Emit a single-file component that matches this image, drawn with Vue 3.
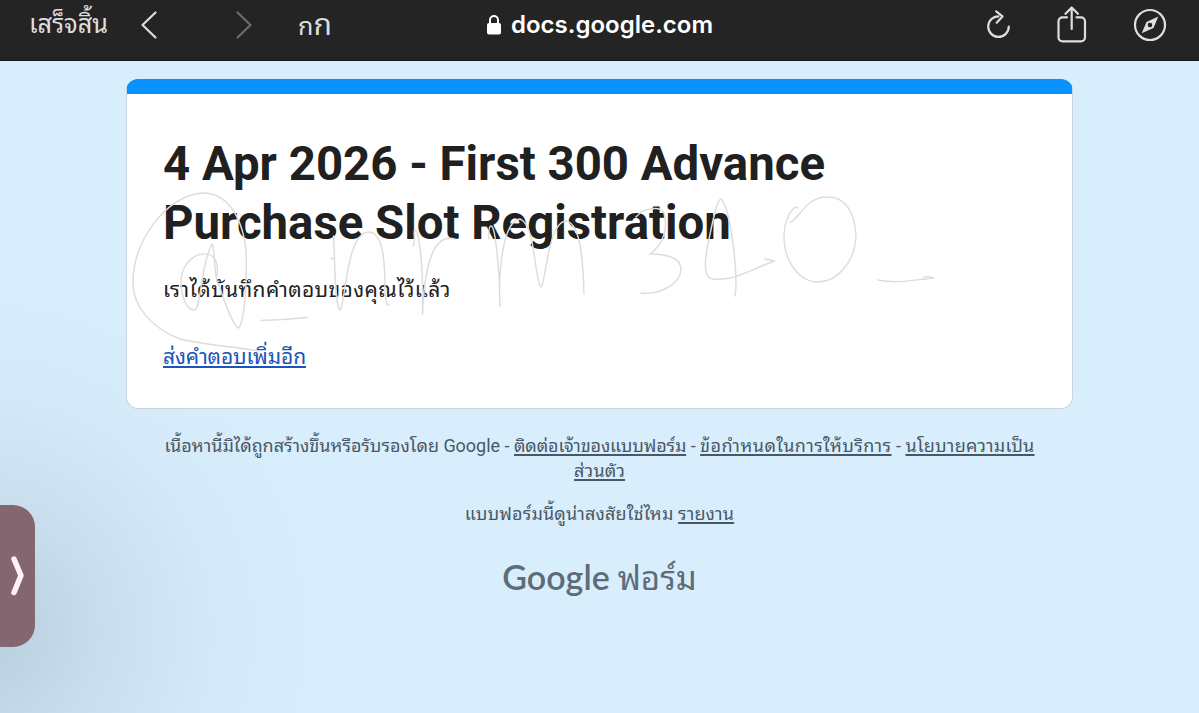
<template>
  <div class="page">
    <header class="toolbar">
      <span class="done">เสร็จสิ้น</span>
      <svg class="back" width="18" height="30" viewBox="0 0 18 30">
        <path d="M15.5 2.5 2.5 15l13 12.5" />
      </svg>
      <svg class="forward" width="18" height="30" viewBox="0 0 18 30">
        <path d="M2.5 2.5 15.5 15l-13 12.5" />
      </svg>
      <span class="text-size"><small>ก</small>ก</span>
      <div class="address">
        <svg width="16" height="22" viewBox="0 0 16 22">
          <path d="M4 10V6a4 4 0 0 1 8 0v4" fill="none" stroke="#fff" stroke-width="2" />
          <rect x="1" y="9" width="14" height="11.500" rx="2" fill="#fff" />
        </svg>
        <span class="host">{{ host }}</span>
      </div>
      <svg class="reload" width="26" height="30" viewBox="0 0 26 30">
        <path d="M12.5 6.3A10.3 10.3 0 1 0 22.8 16.6" />
        <path d="M10.2 1.3 16.5 6.4 10.7 12.7" />
      </svg>
      <svg class="share" width="30" height="38" viewBox="0 0 30 38">
        <path d="M10 11.300H5.5a4 4 0 0 0-4 4v16a4 4 0 0 0 4 4H24a4 4 0 0 0 4-4v-16a4 4 0 0 0-4-4h-4.500" />
        <path d="M14.700 23V2M8.500 7.800l6.200-6.300 6.200 6.300" />
      </svg>
      <svg class="compass" width="34" height="34" viewBox="0 0 34 34">
        <circle cx="17" cy="17" r="15" />
        <path class="needle" fill-rule="evenodd" d="M25.300 8.500 20.500 20 8.700 25.300 13.500 14ZM17 14.700a2.300 2.300 0 1 0 0 4.600 2.300 2.300 0 0 0 0-4.600Z" />
      </svg>
    </header>

    <main class="content">
      <section class="card">
        <h1>{{ titleLines[0] }}<br />{{ titleLines[1] }}</h1>
        <p class="message">เราได้บันทึกคำตอบของคุณไว้แล้ว</p>
        <a class="again" href="#">ส่งคำตอบเพิ่มอีก</a>
      </section>

      <p class="disclaimer">
        <span class="notice">เนื้อหานี้มิได้ถูกสร้างขึ้นหรือรับรองโดย Google</span> -
        <a class="contact" href="#">ติดต่อเจ้าของแบบฟอร์ม</a> -
        <a class="terms" href="#">ข้อกำหนดในการให้บริการ</a> -
        <a class="privacy" href="#">นโยบายความเป็น<br />ส่วนตัว</a>
      </p>
      <p class="report">แบบฟอร์มนี้ดูน่าสงสัยใช่ไหม <a href="#">รายงาน</a></p>
      <div class="brand"><span class="google">Google</span><span class="forms">ฟอร์ม</span></div>
    </main>

    <!-- handwritten signature over the card -->
    <svg class="signature" width="1199" height="713" viewBox="0 0 1199 713">
      <path v-for="(d, i) in strokes" :key="i" :d="d" />
    </svg>

    <div class="drawer">
      <svg width="16" height="42" viewBox="0 0 16 42">
        <path d="M4 4 11 20.500 4 37.500" />
      </svg>
    </div>
  </div>
</template>

<script setup>
const host = 'docs.google.com'
const titleLines = ['4 Apr 2026 - First 300 Advance', 'Purchase Slot Registration']

const strokes = [
  'M217 276C219 260 213 253 203 254C190 255 181 269 181 281C181 297 187 311 195 310C201 308 201 262 212 244C216 250 213 279 219 285C226 307 235 329 239 328C246 315 247 273 246 250C242 215 226 192 201 193C164 198 134 241 133 281C132 305 151 328 180 339C205 345 236 347 258 351',
  'M261 320.500Q284 320 307 317.500',
  'M331 258.500H335M333.500 236C335 266 335 307 340 310C346 303 346 232 369 232C384 233 385 264 385 291C386 303 387 308 389 304',
  'M413 246C417 242 411 225 417 232C422 251 423 287 422.500 315C424 276 430 232 455 239',
  'M489 239C488 222 493 222 495 237C499 264 500 285 500 307C498 267 504 220 520 219C536 225 534 279 541 287C546 283 548 220 567 221C581 226 583 261 584 294',
  'M636 217C644 207 661 206 664 213C668 227 664 244 650 254C671 254 681 260 681 270C680 283 662 295 641 293',
  'M735 296C738 279 732 211 721 199C717 199 712 224 708 244C704 263 704 279 713 279C732 281 744 273 774 261C771 260 768 260 765 259',
  'M798 208C795 205 789 211 785 226C780 257 797 280 816 282C838 283 855 261 856 236C855 211 844 196 827 197C805 197 799 220 790 222',
  'M878 280C897 284 911 280 934 278C930 277 927 276 924 277'
]
</script>

<style>
body {
  margin: 0;
  background: #d9eefd;
}
</style>

<style scoped>
.page {
  position: relative;
  width: 1199px;
  height: 713px;
  overflow: hidden;
  font-family: Roboto, Thonburi, 'Noto Sans Thai Looped', Loma, Garuda, Waree, Umpush, Laksaman, 'Noto Serif Thai', serif;
  background:
    radial-gradient(ellipse 350px 350px at -20px 630px, rgba(120, 145, 160, 0.36), rgba(135, 160, 175, 0.2) 35%, rgba(160, 185, 200, 0.08) 68%, rgba(217, 238, 253, 0)),
    #d9eefd;
}

.toolbar {
  display: flex;
  box-sizing: border-box;
  height: 61px;
  padding-left: 29px;
  background: #242424;
  border-bottom: 1px solid #15181b;
  color: #dedede;
}

.toolbar > svg {
  flex: none;
  fill: none;
  stroke: #dedede;
  stroke-width: 2.200;
  stroke-linecap: round;
  stroke-linejoin: round;
}

.done {
  width: 111px;
  font-size: 25.4px;
  line-height: 49px;
  white-space: nowrap;
}

.back {
  margin-top: 10px;
}

.toolbar > .forward {
  margin: 10px 0 0 77px;
  stroke: #6c6c6c;
}

.text-size {
  width: 188px;
  margin-left: 45px;
  font-size: 30px;
  line-height: 49px;
}

.text-size small {
  font-size: 25px;
}

.address {
  display: flex;
  width: 499px;
  height: 49px;
  gap: 9px;
  align-items: center;
  color: #fff;
}

.host {
  font: 600 24px/49px Inter, sans-serif;
}

.toolbar > .reload {
  margin: 10px 0 0 1px;
}

.toolbar > .share {
  margin: 6px 0 0 45px;
}

.toolbar > .compass {
  margin: 8px 0 0 46px;
}

.compass .needle {
  fill: #dedede;
  stroke: none;
}

.content {
  width: 947px;
  margin: 18px auto 0;
}

.card {
  box-sizing: border-box;
  height: 330px;
  padding: 41px 36px 0;
  background: #fff;
  border: 1px solid #cbd3da;
  border-top: 15px solid #0891ff;
  border-radius: 12px;
}

h1 {
  margin: 0;
  color: #202020;
  font-size: 47.35px;
  font-weight: 700;
  line-height: 59px;
  white-space: nowrap;
}

.message {
  height: 67px;
  margin: 21px 0 0;
  color: #202124;
  font-size: 21px;
  line-height: 32px;
  letter-spacing: 0.36px;
}

.again {
  display: inline-block;
  color: #1a55b8;
  font-size: 21px;
  line-height: 32px;
  letter-spacing: -0.1px;
}

a {
  color: inherit;
  text-decoration: underline;
  text-decoration-skip-ink: none;
  text-decoration-thickness: 1.5px;
  text-underline-offset: 2px;
}

.disclaimer,
.report {
  margin: 24px 0 0;
  color: #4a5865;
  font-size: 18px;
  line-height: 25px;
  text-align: center;
  white-space: nowrap;
}

.notice {
  letter-spacing: -0.02px;
}

.contact {
  letter-spacing: -0.16px;
}

.terms {
  letter-spacing: 0.45px;
}

.privacy {
  letter-spacing: 0.2px;
}

.report {
  margin-top: 18px;
  letter-spacing: 0.14px;
}

.brand {
  display: flex;
  justify-content: center;
  align-items: baseline;
  gap: 8px;
  margin-top: 26px;
  color: #5f6b78;
  line-height: 50px;
}

.google {
  font-family: Lato, sans-serif;
  font-size: 34px;
  font-weight: 600;
}

.forms {
  font-size: 33px;
}

.signature {
  position: absolute;
  inset: 0;
  fill: none;
  stroke: #dcdcdc;
  stroke-width: 1.4;
  stroke-linecap: round;
  pointer-events: none;
}

.drawer {
  position: absolute;
  top: 505px;
  left: 0;
  display: flex;
  align-items: center;
  box-sizing: border-box;
  width: 35px;
  height: 142px;
  padding-left: 10px;
  background: #836670;
  border-radius: 0 22px 22px 0;
}

.drawer path {
  fill: none;
  stroke: #fff0fa;
  stroke-width: 5.500;
  stroke-linecap: round;
  stroke-linejoin: round;
}
</style>
